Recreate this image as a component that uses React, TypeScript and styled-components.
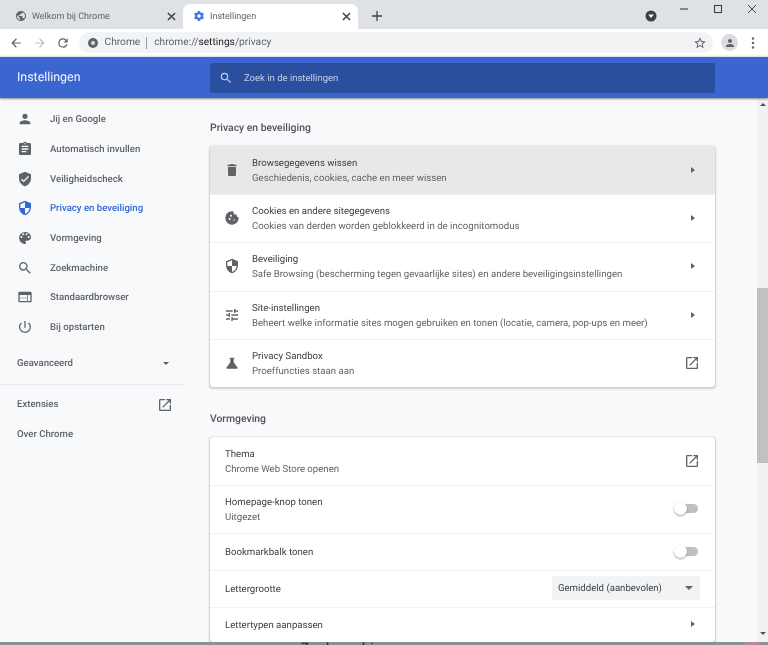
import React from "react";
import styled, { createGlobalStyle } from "styled-components";

const Global = createGlobalStyle`
  html, body { margin: 0; padding: 0; width: 768px; height: 645px; overflow: hidden; background: #dee1e6; }
  * { box-sizing: border-box; }
  #root { width: 768px; height: 645px; }
`;

const Win = styled.div`
  width: 768px; height: 645px; display: flex; flex-direction: column; overflow: hidden;
  font-family: Roboto, "Liberation Sans", sans-serif; color: #202124; background: #dee1e6;
  text-rendering: geometricPrecision;
  filter: blur(0.3px);
`;
const TabStrip = styled.div`
  height: 29px; flex: none; display: flex; align-items: flex-end; padding-left: 8px; background: #dee1e6;
`;
const Tab = styled.div<{ $active?: boolean }>`
  width: 175px; height: 25px; flex: none; display: flex; align-items: center; padding: 0 7px 1px ${p => (p.$active ? 10 : 7)}px; font-size: 9px;
  color: #5f6368; border-radius: 7px 7px 0 0;
  background: ${p => (p.$active ? "#fff" : "transparent")};
  svg { flex: none; }
`;
const TabTitle = styled.span`
  margin-left: 5px; flex: 1; padding-top: 1px;
`;
const NewTab = styled.div`
  width: 18px; height: 18px; margin: 0 0 4px 10px; display: flex; align-items: center; justify-content: center;
`;
const WinControls = styled.div`
  margin-left: auto; margin-right: -1px; height: 29px; align-self: flex-start; display: flex; align-items: flex-start;
`;
const Circle = styled.div`
  width: 20px; height: 20px; margin: 6px 6px 0 0; display: flex; align-items: center; justify-content: center;
`;
const Ctrl = styled.div`
  width: 34px; height: 18px; display: flex; align-items: center; justify-content: center;
`;
const Toolbar = styled.div`
  height: 27px; flex: none; display: flex; align-items: center; background: #fff; padding: 0 7px 0 5px;
`;
const NavBtn = styled.div`
  width: 22px; height: 22px; margin-right: 1.5px; display: flex; align-items: center; justify-content: center;
`;
const Omni = styled.div`
  flex: 1; height: 21px; margin-left: 3px; border-radius: 11px; background: #f1f3f4; display: flex; align-items: center; padding: 0 6px 0 8px; font-size: 10.2px; color: #5f6368;
`;
const OmniLabel = styled.span`
  margin-left: 6px;
`;
const Sep = styled.span`
  width: 1px; height: 12px; background: #9aa0a6; margin: 0 7px 0 6px;
`;
const OmniStrong = styled.span`
  color: #202124;
`;
const OmniSpacer = styled.span`
  flex: 1;
`;
const Avatar = styled.div`
  width: 17px; height: 17px; border-radius: 50%; background: #dadce0; margin-left: 8px; display: flex; align-items: center; justify-content: center; overflow: hidden;
`;
const Dots = styled.div`
  width: 16px; height: 16px; margin-left: 7px; display: flex; align-items: center; justify-content: center;
`;
const Header = styled.div`
  height: 42px; flex: none; background: #3b66cf; display: flex; align-items: center; border-top: 1px solid #dfe3ee; box-shadow: 0 1px 2px rgba(60,64,67,.6); position: relative; z-index: 2;
`;
const HeaderTitle = styled.div`
  width: 210px; padding-left: 17px; color: #fff; font-size: 12.4px; opacity: .95;
`;
const Search = styled.div`
  width: 505px; height: 30px; border-radius: 2px; background: #2b4f9f; display: flex; align-items: center; padding-left: 9px; color: #c3cee8; font-size: 9.5px;
`;
const SearchText = styled.span`
  margin-left: 11px; padding-top: 1px;
`;
const Body = styled.div`
  flex: 1; min-height: 0; display: flex; background: #f8f9fa; overflow: hidden;
`;
const Side = styled.div`
  width: 185px; flex: none; padding-top: 7px; font-size: 9.6px; font-weight: 500; color: #5f6368;
`;
const NavItem = styled.div<{ $active?: boolean }>`
  height: 29.7px; display: flex; align-items: center; padding-left: 17px; color: ${p => (p.$active ? "#3367d6" : "#5f6368")};
  svg { flex: none; width: 16px; height: 16px; margin-right: 17px; margin-top: -1px; fill: currentColor; }
`;
const PlainItem = styled.div`
  height: 30px; display: flex; align-items: center; justify-content: space-between; padding: 0 12px 0 17px;
`;
const Advanced = styled(PlainItem)`
  height: 32px; margin-top: 5px; padding-right: 16px;
`;
const Divider = styled.div`
  height: 1px; background: #e8eaed; margin: 4px 0 5px;
`;
const Main = styled.div`
  flex: 1; min-width: 0; padding: 0 0 0 25px; overflow: hidden;
`;
const SectionTitle = styled.div<{ $gap: number }>`
  height: 18px; margin-top: ${p => p.$gap}px; margin-bottom: 9px; font-size: 10.4px; font-weight: 500; color: #50535a; line-height: 18px;
`;
const Card = styled.div`
  width: 505px; background: #fff; border-radius: 3px; box-shadow: 0 0 1px rgba(60,64,67,.3), 0 1px 2px 1px rgba(60,64,67,.2);
`;
const Row = styled.div<{ $h: number; $hover?: boolean; $first?: boolean }>`
  height: ${p => p.$h}px; display: flex; align-items: center; padding: 0 15px ${p => (p.$first ? 0 : 1)}px;
  background: ${p => (p.$hover ? "#e8e8e8" : "transparent")};
  border-top: ${p => (p.$first ? "none" : "1px solid #f0f1f2")};
  border-radius: ${p => (p.$first ? "3px 3px 0 0" : "0")};
  svg.lead { flex: none; width: 16px; height: 16px; fill: #5f6368; margin-right: 12px; margin-left: -1px; }
`;
const RowText = styled.div`
  flex: 1; min-width: 0; padding-top: 2px; font-size: 9.65px; color: #3c4043;
`;
const Primary = styled.div`
  line-height: 15px;
`;
const Secondary = styled.div`
  line-height: 15px; color: #5f6368;
`;
const Arrow = styled.span`
  width: 0; height: 0; border-left: 4px solid #5f6368; border-top: 3px solid transparent; border-bottom: 3px solid transparent; margin-right: 5px;
`;
const Toggle = styled.span`
  position: relative; width: 22px; height: 9px; border-radius: 5px; background: #bdc1c6; margin-right: 2px;
  &::after { content: ""; position: absolute; left: -2px; top: -2px; width: 13px; height: 13px; border-radius: 50%; background: #fff; box-shadow: 0 1px 2px rgba(60,64,67,.5); }
`;
const Select = styled.div`
  width: 148px; height: 24px; border-radius: 3px; background: #f1f3f4; display: flex; align-items: center; justify-content: space-between; padding: 0 6px; font-size: 9.6px; color: #3c4043;
`;
const Caret = styled.span`
  width: 0; height: 0; border-top: 4px solid #5f6368; border-left: 4px solid transparent; border-right: 4px solid transparent; margin-right: 1px;
`;
const SmallCaret = styled(Caret)`
  border-top-width: 3px; border-left-width: 3px; border-right-width: 3px; margin-right: 0;
`;
const Track = styled.div`
  width: 11px; flex: none; background: #f1f1f1; display: flex; flex-direction: column; align-items: center;
`;
const ArrowUp = styled.span`
  flex: none; width: 0; height: 0; margin-top: 5px; border-bottom: 3px solid #505050; border-left: 3px solid transparent; border-right: 3px solid transparent;
`;
const Thumb = styled.div`
  width: 11px; height: 175px; margin-top: 182px; background: #c1c1c1;
`;
const ArrowDown = styled.span`
  flex: none; width: 0; height: 0; margin-top: auto; margin-bottom: 7px; border-top: 3px solid #505050; border-left: 3px solid transparent; border-right: 3px solid transparent;
`;
const BottomEdge = styled.div`
  height: 3px; flex: none; background: #8d8f92; display: flex; padding-left: 301px; overflow: hidden;
`;
const ClippedText = styled.div`
  font-size: 13px; line-height: 13px; font-weight: 500; color: #303134; letter-spacing: 1px;
`;
const EdgeMark = styled.div`
  width: 15px; margin-left: auto; margin-right: 8px; background: #b88a95;
`;

const Ic = ({ d, className }: { d: string; className?: string }) => (
  <svg className={className} viewBox="0 0 24 24"><path d={d} /></svg>
);
const External = () => (
  <svg width="16" height="16" viewBox="0 0 24 24" fill="#5f6368">
    <path d="M19 19H5V5h7V3H5a2 2 0 0 0-2 2v14a2 2 0 0 0 2 2h14c1.1 0 2-.9 2-2v-7h-2v7zM14 3v2h3.59l-9.83 9.83 1.41 1.41L19 6.41V10h2V3h-7z" />
  </svg>
);
const X = ({ s = 9, w = 1.6, c = "#3c4043" }: { s?: number; w?: number; c?: string }) => (
  <svg width={s} height={s} viewBox="0 0 10 10" stroke={c} strokeWidth={w} fill="none"><path d="M1 1l8 8M9 1l-8 8" /></svg>
);

const P = {
  person: "M12 12c2.21 0 4-1.79 4-4s-1.79-4-4-4-4 1.79-4 4 1.79 4 4 4zm0 2c-2.67 0-8 1.34-8 4v2h16v-2c0-2.66-5.33-4-8-4z",
  clipboard: "M19 3h-4.18C14.4 1.84 13.3 1 12 1s-2.4.84-2.82 2H5c-1.1 0-2 .9-2 2v14c0 1.1.9 2 2 2h14c1.1 0 2-.9 2-2V5c0-1.1-.9-2-2-2zm-7 0c.55 0 1 .45 1 1s-.45 1-1 1-1-.45-1-1 .45-1 1-1zm2 14H7v-2h7v2zm3-4H7v-2h10v2zm0-4H7V7h10v2z",
  shieldCheck: "M12 1 3 5v6c0 5.55 3.84 10.74 9 12 5.16-1.26 9-6.45 9-12V5l-9-4zm-2 16-4-4 1.41-1.41L10 14.17l6.59-6.59L18 9l-8 8z",
  shield: "M12 1 3 5v6c0 5.55 3.84 10.74 9 12 5.16-1.26 9-6.45 9-12V5l-9-4zm0 10.99h7c-.53 4.12-3.28 7.79-7 8.94V12H5V6.3l7-3.11v8.8z",
  palette: "M12 3a9 9 0 0 0 0 18c.83 0 1.5-.67 1.5-1.5 0-.39-.15-.74-.39-1.01-.23-.26-.38-.61-.38-.99 0-.83.67-1.5 1.5-1.5H16c2.76 0 5-2.24 5-5 0-4.42-4.03-8-9-8zm-5.5 9a1.5 1.5 0 1 1 0-3 1.5 1.5 0 0 1 0 3zm3-4a1.5 1.5 0 1 1 0-3 1.5 1.5 0 0 1 0 3zm5 0a1.5 1.5 0 1 1 0-3 1.5 1.5 0 0 1 0 3zm3 4a1.5 1.5 0 1 1 0-3 1.5 1.5 0 0 1 0 3z",
  search: "M15.5 14h-.79l-.28-.27A6.47 6.47 0 0 0 16 9.5 6.5 6.5 0 1 0 9.5 16c1.61 0 3.09-.59 4.23-1.57l.27.28v.79l5 4.99L20.49 19l-4.99-5zm-6 0C7.01 14 5 11.99 5 9.5S7.01 5 9.5 5 14 7.01 14 9.5 11.99 14 9.5 14z",
  browser: "M20 4H4c-1.1 0-2 .9-2 2v12c0 1.1.9 2 2 2h16c1.1 0 2-.9 2-2V6c0-1.1-.9-2-2-2zm-5 14H4v-4h11v4zm0-5H4V9h11v4zm5 5h-4V9h4v9z",
  power: "M13 3h-2v10h2V3zm4.83 2.17-1.42 1.42A6.92 6.92 0 0 1 19 12c0 3.87-3.13 7-7 7A6.995 6.995 0 0 1 7.58 6.58L6.17 5.17A8.932 8.932 0 0 0 3 12a9 9 0 0 0 18 0c0-2.74-1.23-5.18-3.17-6.83z",
  trash: "M6 19c0 1.1.9 2 2 2h8c1.1 0 2-.9 2-2V7H6v12zM19 4h-3.5l-1-1h-5l-1 1H5v2h14V4z",
  cookie: "M21.95 10.99c-1.79-.03-3.7-1.95-2.68-4.22-2.97 1-5.78-1.59-5.19-4.56C7.1.74 2 6.41 2 12c0 5.52 4.48 10 10 10 5.89 0 10.54-5.08 9.95-11.01zM8.5 15a1.5 1.5 0 1 1 0-3 1.5 1.5 0 0 1 0 3zm2-5a1.5 1.5 0 1 1 0-3 1.5 1.5 0 0 1 0 3zm4.5 6a1 1 0 1 1 0-2 1 1 0 0 1 0 2z",
  tune: "M3 17v2h6v-2H3zM3 5v2h10V5H3zm10 16v-2h8v-2h-8v-2h-2v6h2zM7 9v2H3v2h4v2h2V9H7zm14 4v-2H11v2h10zm-6-4h2V7h4V5h-4V3h-2v6z",
  flaskFill: "M20.3 18.9 14.5 11V6.5l1.35-1.69c.26-.33.03-.81-.39-.81H8.54c-.42 0-.65.48-.39.81L9.5 6.5V11l-5.8 7.9c-.49.66-.02 1.6.8 1.6h15c.82 0 1.29-.94.8-1.6z",
};

const navItems: [string, string][] = [
  [P.person, "Jij en Google"],
  [P.clipboard, "Automatisch invullen"],
  [P.shieldCheck, "Veiligheidscheck"],
  [P.shield, "Privacy en beveiliging"],
  [P.palette, "Vormgeving"],
  [P.search, "Zoekmachine"],
  [P.browser, "Standaardbrowser"],
  [P.power, "Bij opstarten"],
];

const privacy: [string, string, string][] = [
  [P.trash, "Browsegegevens wissen", "Geschiedenis, cookies, cache en meer wissen"],
  [P.cookie, "Cookies en andere sitegegevens", "Cookies van derden worden geblokkeerd in de incognitomodus"],
  [P.shield, "Beveiliging", "Safe Browsing (bescherming tegen gevaarlijke sites) en andere beveiligingsinstellingen"],
  [P.tune, "Site-instellingen", "Beheert welke informatie sites mogen gebruiken en tonen (locatie, camera, pop-ups en meer)"],
  [P.flaskFill, "Privacy Sandbox", "Proeffuncties staan aan"],
];

export default function App() {
  return (
    <Win>
      <Global />
      <TabStrip>
        <Tab>
          <svg width="12" height="12" viewBox="0 0 24 24" fill="#5f6368"><path d="M12 2C6.48 2 2 6.48 2 12s4.48 10 10 10 10-4.48 10-10S17.52 2 12 2zm-1 17.93A8 8 0 0 1 4 12c0-.62.08-1.21.21-1.79L9 15v1c0 1.1.9 2 2 2v1.93zm6.9-2.54A2 2 0 0 0 16 16h-1v-3c0-.55-.45-1-1-1H8v-2h2c.55 0 1-.45 1-1V7h2c1.1 0 2-.9 2-2v-.41A8 8 0 0 1 17.9 17.39z" /></svg>
          <TabTitle>Welkom bij Chrome</TabTitle>
          <X />
        </Tab>
        <Tab $active>
          <svg width="12" height="12" viewBox="0 0 24 24" fill="#3b78e7"><path d="M19.43 12.98c.04-.32.07-.64.07-.98s-.03-.66-.07-.98l2.11-1.65c.19-.15.24-.42.12-.64l-2-3.46c-.12-.22-.39-.3-.61-.22l-2.49 1c-.52-.4-1.08-.73-1.69-.98l-.38-2.65A.49.49 0 0 0 14 2h-4c-.25 0-.46.18-.49.42l-.38 2.65c-.61.25-1.17.59-1.69.98l-2.49-1c-.23-.09-.49 0-.61.22l-2 3.46c-.13.22-.07.49.12.64l2.11 1.65c-.04.32-.07.65-.07.98s.03.66.07.98l-2.11 1.65c-.19.15-.24.42-.12.64l2 3.46c.12.22.39.3.61.22l2.49-1c.52.4 1.08.73 1.69.98l.38 2.65c.03.24.24.42.49.42h4c.25 0 .46-.18.49-.42l.38-2.65c.61-.25 1.17-.59 1.69-.98l2.49 1c.23.09.49 0 .61-.22l2-3.46c.12-.22.07-.49-.12-.64l-2.11-1.65zM12 15.5A3.5 3.5 0 1 1 12 8.5a3.5 3.5 0 0 1 0 7z" /></svg>
          <TabTitle>Instellingen</TabTitle>
          <X />
        </Tab>
        <NewTab>
          <svg width="10" height="10" viewBox="0 0 10 10" stroke="#3c4043" strokeWidth="1.3"><path d="M5 0v10M0 5h10" /></svg>
        </NewTab>
        <WinControls>
          <Circle>
            <svg width="14" height="14" viewBox="0 0 14 14"><circle cx="7" cy="7" r="5.5" fill="#3c4043" /><path d="M4.2 5.6h5.6L7 9z" fill="#fff" /></svg>
          </Circle>
          <Ctrl><svg width="10" height="10" viewBox="0 0 10 10" stroke="#3c4043" strokeWidth="1.1"><path d="M1 5h8" /></svg></Ctrl>
          <Ctrl><svg width="10" height="10" viewBox="0 0 10 10" stroke="#3c4043" strokeWidth="1.1" fill="none"><rect x="1.5" y="1.5" width="7" height="7" /></svg></Ctrl>
          <Ctrl><X s={10} w={1} /></Ctrl>
        </WinControls>
      </TabStrip>
      <Toolbar>
        <NavBtn><svg width="14" height="14" viewBox="0 0 24 24" fill="#5f6368"><path d="M20 11H7.83l5.59-5.59L12 4l-8 8 8 8 1.41-1.41L7.83 13H20v-2z" /></svg></NavBtn>
        <NavBtn><svg width="14" height="14" viewBox="0 0 24 24" fill="#bdc1c6"><path d="M12 4l-1.41 1.41L16.17 11H4v2h12.17l-5.58 5.59L12 20l8-8z" /></svg></NavBtn>
        <NavBtn><svg width="14" height="14" viewBox="0 0 24 24" fill="#5f6368"><path d="M17.65 6.35A7.958 7.958 0 0 0 12 4a8 8 0 1 0 7.73 10h-2.08A5.99 5.99 0 0 1 12 18a6 6 0 1 1 0-12c1.66 0 3.14.69 4.22 1.78L13 11h7V4l-2.35 2.35z" /></svg></NavBtn>
        <Omni>
          <svg width="12" height="12" viewBox="0 0 12 12"><circle cx="6" cy="6" r="5" fill="#5f6368" /><circle cx="6" cy="6" r="2" fill="#dadce0" /></svg>
          <OmniLabel>Chrome</OmniLabel>
          <Sep />
          <span>chrome://<OmniStrong>settings</OmniStrong>/privacy</span>
          <OmniSpacer />
          <svg width="14" height="14" viewBox="0 0 24 24" fill="#5f6368"><path d="M22 9.24l-7.19-.62L12 2 9.19 8.63 2 9.24l5.46 4.73L5.82 21 12 17.27 18.18 21l-1.63-7.03L22 9.24zM12 15.4l-3.76 2.27 1-4.28-3.32-2.88 4.38-.38L12 6.1l1.71 4.04 4.38.38-3.32 2.88 1 4.28L12 15.4z" /></svg>
        </Omni>
        <Avatar><svg width="12" height="12" viewBox="0 0 24 24" fill="#5f6368"><path d={P.person} /></svg></Avatar>
        <Dots><svg width="4" height="12" viewBox="0 0 4 12" fill="#5f6368"><circle cx="2" cy="1.5" r="1.2" /><circle cx="2" cy="6" r="1.2" /><circle cx="2" cy="10.5" r="1.2" /></svg></Dots>
      </Toolbar>
      <Header>
        <HeaderTitle>Instellingen</HeaderTitle>
        <Search>
          <svg width="14" height="14" viewBox="0 0 24 24" fill="#c3cee8"><path d={P.search} /></svg>
          <SearchText>Zoek in de instellingen</SearchText>
        </Search>
      </Header>
      <Body>
        <Side>
          {navItems.map(([d, label]) => (
            <NavItem key={label} $active={label === "Privacy en beveiliging"}>
              <Ic d={d} />
              {label}
            </NavItem>
          ))}
          <Advanced>Geavanceerd<SmallCaret /></Advanced>
          <Divider />
          <PlainItem>Extensies<External /></PlainItem>
          <PlainItem>Over Chrome</PlainItem>
        </Side>
        <Main>
          <SectionTitle $gap={21}>Privacy en beveiliging</SectionTitle>
          <Card>
            {privacy.map(([d, a, b], i) => (
              <Row key={a} $h={48.2} $hover={i === 0} $first={i === 0}>
                <Ic className="lead" d={d} />
                <RowText><Primary>{a}</Primary><Secondary>{b}</Secondary></RowText>
                {i === 4 ? <External /> : <Arrow />}
              </Row>
            ))}
          </Card>
          <SectionTitle $gap={23}>Vormgeving</SectionTitle>
          <Card>
            <Row $h={48} $first>
              <RowText><Primary>Thema</Primary><Secondary>Chrome Web Store openen</Secondary></RowText>
              <External />
            </Row>
            <Row $h={48}>
              <RowText><Primary>Homepage-knop tonen</Primary><Secondary>Uitgezet</Secondary></RowText>
              <Toggle />
            </Row>
            <Row $h={37}>
              <RowText><Primary>Bookmarkbalk tonen</Primary></RowText>
              <Toggle />
            </Row>
            <Row $h={37}>
              <RowText><Primary>Lettergrootte</Primary></RowText>
              <Select>Gemiddeld (aanbevolen)<Caret /></Select>
            </Row>
            <Row $h={35}>
              <RowText><Primary>Lettertypen aanpassen</Primary></RowText>
              <Arrow />
            </Row>
          </Card>
        </Main>
        <Track>
          <ArrowUp />
          <Thumb />
          <ArrowDown />
        </Track>
      </Body>
      <BottomEdge>
        <ClippedText>Zoekmachine</ClippedText>
        <EdgeMark />
      </BottomEdge>
    </Win>
  );
}
